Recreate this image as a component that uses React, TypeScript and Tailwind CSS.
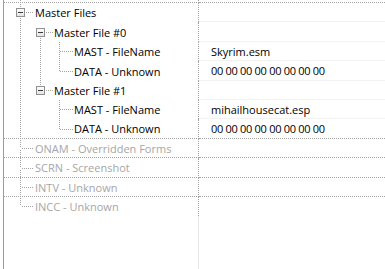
import React from "react";

type Row = {
  level: number;
  text: string;
  value?: string;
  gray?: boolean;
  expander?: boolean;
  guides: boolean[];
  last?: boolean;
  noTop?: boolean;
  sep?: boolean;
  faint?: boolean;
  h: number;
};

const ZEROS = "00 00 00 00 00 00 00 00";

const rows: Row[] = [
  { level: 0, text: "Master Files", expander: true, guides: [], h: 19, faint: true },
  { level: 1, text: "Master File #0", expander: true, guides: [true], noTop: true, h: 20, faint: true },
  { level: 2, text: "MAST - FileName", value: "Skyrim.esm", guides: [true, true], h: 19, faint: true },
  { level: 2, text: "DATA - Unknown", value: ZEROS, guides: [true, true], last: true, h: 20, faint: true },
  { level: 1, text: "Master File #1", expander: true, guides: [true], last: true, h: 19, faint: true },
  { level: 2, text: "MAST - FileName", value: "mihailhousecat.esp", guides: [true, false], h: 19, faint: true },
  { level: 2, text: "DATA - Unknown", value: ZEROS, guides: [true, false], last: true, sep: true, h: 20 },
  { level: 0, text: "ONAM - Overridden Forms", gray: true, guides: [], sep: true, h: 19 },
  { level: 0, text: "SCRN - Screenshot", gray: true, guides: [], sep: true, h: 20 },
  { level: 0, text: "INTV - Unknown", gray: true, guides: [], sep: true, h: 19 },
  { level: 0, text: "INCC - Unknown", gray: true, guides: [], last: true, h: 19 },
];

const GX = [16, 36, 55];
const HEND = [29, 48, 68];
const SVGW = [31, 50, 70];
const DOT = "#a3a3a3";

function Guides({ row, top }: { row: Row; top: number }) {
  const { level, h } = row;
  const W = SVGW[level];
  const cy = Math.floor(h / 2);
  const dots: React.ReactElement[] = [];
  const vline = (x: number, y0: number, y1: number) => {
    for (let y = y0; y < y1; y++) {
      if ((top + y) % 2 === 0) dots.push(<rect key={`v${x}-${y}`} x={x} y={y} width={1} height={1} fill={DOT} />);
    }
  };
  const hline = (x0: number, x1: number, y: number) => {
    for (let x = x0; x <= x1; x++) {
      if ((x + 4) % 2 === 0) dots.push(<rect key={`h${x}-${y}`} x={x} y={y} width={1} height={1} fill={DOT} />);
    }
  };
  for (let a = 0; a < level; a++) if (row.guides[a]) vline(GX[a], 0, h);
  const g = GX[level];
  if (!row.noTop) vline(g, 0, cy);
  if (!row.last) vline(g, cy + 1, h);
  hline(g + 1, HEND[level], cy);
  return (
    <svg width={W} height={h} className="shrink-0 block" shapeRendering="crispEdges">
      <defs>
        <linearGradient id="exp" x1="0" y1="0" x2="0" y2="1">
          <stop offset="0" stopColor="#ffffff" />
          <stop offset="1" stopColor="#e2e2e2" />
        </linearGradient>
      </defs>
      {dots}
      {row.expander && (
        <g>
          <rect x={g - 4} y={cy - 4} width={9} height={9} fill="url(#exp)" />
          <rect x={g - 3.5} y={cy - 3.5} width={8} height={8} fill="none" stroke="#919191" strokeWidth={1} />
          <rect x={g - 2} y={cy} width={5} height={1} fill="#3a3a3a" />
        </g>
      )}
    </svg>
  );
}

function TopGuide() {
  const dots: React.ReactElement[] = [];
  for (let y = 0; y < 2; y++) if (y % 2 === 0) dots.push(<rect key={y} x={16} y={y} width={1} height={1} fill={DOT} />);
  return (
    <svg width={20} height={2} className="block" shapeRendering="crispEdges">
      {dots}
    </svg>
  );
}

export default function App() {
  let top = 3;
  return (
    <div
      className="w-[385px] h-[269px] bg-white overflow-hidden flex text-[11px] text-black"
      style={{ fontFamily: '"Open Sans", "Noto Sans", sans-serif' }}
    >
      <div className="ml-[3px] border-l border-[#9c9c9c] flex-1 flex flex-col">
        <div className="flex h-[3px] shrink-0">
          <div className="w-[195px] border-r border-b border-dotted border-[#a3a3a3]">
            <TopGuide />
          </div>
          <div className="flex-1 border-b border-dotted border-[#a3a3a3]" />
        </div>
        {rows.map((r, i) => {
          const t = top;
          top += r.h;
          const hc = r.h === 20 ? "h-[20px]" : "h-[19px]";
          return (
            <div key={i} className={`flex shrink-0 ${hc}`}>
              <div
                className={`w-[195px] flex items-start border-r border-dotted border-[#a3a3a3] ${
                  r.sep ? "border-b" : ""
                }`}
              >
                <Guides row={r} top={t} />
                <div
                  className={`h-full flex items-center whitespace-nowrap leading-none ${
                    r.gray ? "text-[#a6a6a6]" : "text-black"
                  }`}
                >
                  {r.text}
                </div>
              </div>
              <div
                className={`flex-1 flex items-center pl-[12px] whitespace-nowrap leading-none ${
                  r.sep ? "border-b border-dotted border-[#a3a3a3]" : r.faint ? "border-b border-[#f2f2f2]" : ""
                }`}
              >
                {r.value && (
                  <span className={r.value === ZEROS ? "tracking-[-0.3px]" : ""}>{r.value}</span>
                )}
              </div>
            </div>
          );
        })}
        <div className="flex flex-1">
          <div className="w-[195px] border-r border-[#e6e6e6]" />
          <div className="flex-1" />
        </div>
      </div>
    </div>
  );
}
